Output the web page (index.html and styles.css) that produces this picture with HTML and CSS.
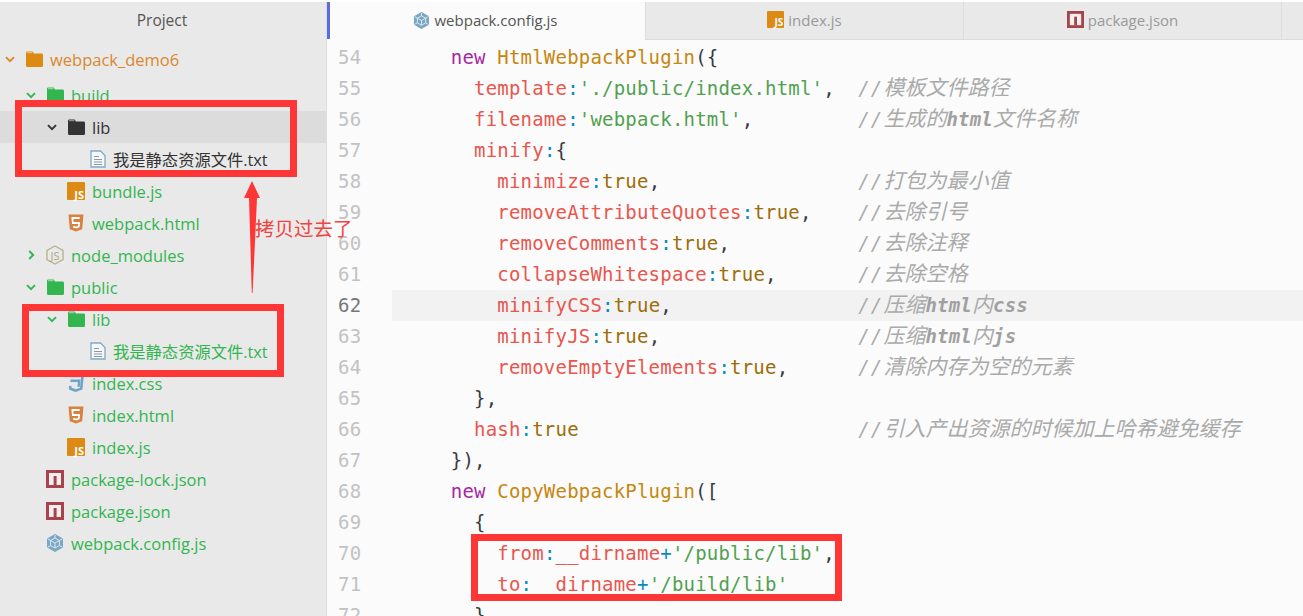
FILE: index.html
```html
<!DOCTYPE html>
<html lang="zh">
<head>
<meta charset="utf-8">
<title>webpack.config.js</title>
<link rel="stylesheet" href="styles.css">
</head>
<body>
<svg class="defs" width="0" height="0" aria-hidden="true">
  <symbol id="i-folder" viewBox="0 0 18 17"><path d="M1 2.2Q1 1 2.2 1H7.6L9 3H16.6Q18 3 18 4.4V15Q18 16.5 16.6 16.5H2.4Q1 16.5 1 15Z" fill="currentColor"/><path d="M2 2.2H7.4" stroke="#fff" stroke-opacity=".55" stroke-width="1"/></symbol>
  <symbol id="i-chev-d" viewBox="0 0 10 7"><path d="M1 1.2L5 5.2L9 1.2" fill="none" stroke="currentColor" stroke-width="1.9"/></symbol>
  <symbol id="i-chev-r" viewBox="0 0 7 10"><path d="M1.2 1L5.2 5L1.2 9" fill="none" stroke="currentColor" stroke-width="1.9"/></symbol>
  <symbol id="i-txt" viewBox="0 0 16 18"><path d="M1 1H10.5L15 5.5V17H1Z" fill="#f4f6f8" stroke="#7fabc8" stroke-width="1.3"/><path d="M4 6.5H9M4 9.5H12M4 12H12M4 14.5H12" stroke="#8c9aa5" stroke-width="1"/></symbol>
  <symbol id="i-html" viewBox="0 0 16 18"><path d="M0.5 0.5H15.5L14.2 15.3L8 17.5L1.8 15.3Z" fill="#d8823f"/><path d="M11.6 4H4.4L4.8 9H11.1L10.8 12.6L8 13.5L5.2 12.6" fill="none" stroke="#fff" stroke-width="1.8"/></symbol>
  <symbol id="i-css" viewBox="0 0 16 18"><path d="M1.6 2H14.5L13.2 14.6L7.6 16.6L2.4 14.8L2 11.8" fill="none" stroke="#6fa4c8" stroke-width="2.6"/><path d="M2.4 6.8H11.2L10.6 12.8" fill="none" stroke="#6fa4c8" stroke-width="2.4"/></symbol>
  <symbol id="i-npm" viewBox="0 0 18 18"><rect width="18" height="18" fill="#a9434b"/><rect x="3" y="3" width="12" height="12" fill="#f3eff1"/><rect x="7.6" y="6" width="3" height="9" fill="#a9434b"/></symbol>
  <symbol id="i-cube" viewBox="0 0 18 18"><path d="M9 0L17 4.5V13.5L9 18L1 13.5V4.5Z" fill="#7aa8c4"/><path d="M9 4L13.4 6.5V11.5L9 14L4.6 11.5V6.5ZM4.6 6.5L9 9L13.4 6.5M9 9V14M9 1V4M1.6 4.8L4.6 6.5M16.4 4.8L13.4 6.5M1.6 13.2L4.6 11.5M16.4 13.2L13.4 11.5" fill="none" stroke="#e6eef3" stroke-width=".9"/></symbol>
</svg>

<div class="app">
  <aside class="side">
    <header class="side-head">Project</header>
    <ul class="tree">
      <li class="row root l0 c-root"><svg class="cd"><use href="#i-chev-d"/></svg><svg class="ico f-root"><use href="#i-folder"/></svg><span>webpack_demo6</span></li>
      <li class="row l1 c-green"><svg class="cd"><use href="#i-chev-d"/></svg><svg class="ico"><use href="#i-folder"/></svg><span>build</span></li>
      <li class="row l2 c-dark sel"><svg class="cd"><use href="#i-chev-d"/></svg><svg class="ico"><use href="#i-folder"/></svg><span>lib</span></li>
      <li class="row l3 c-dark"><i class="chev"></i><svg class="ico ico-doc"><use href="#i-txt"/></svg><span>我是静态资源文件.txt</span></li>
      <li class="row l2 c-green"><i class="chev"></i><b class="ico js"><em>JS</em></b><span>bundle.js</span></li>
      <li class="row l2 c-green"><i class="chev"></i><svg class="ico ico-txt"><use href="#i-html"/></svg><span>webpack.html</span></li>
      <li class="row l1 c-green"><svg class="cr"><use href="#i-chev-r"/></svg><svg class="ico ico-node" viewBox="0 0 18 20"><path d="M9 1L17 5.5V14.5L9 19L1 14.5V5.5Z" fill="none" stroke="#b6b58d" stroke-width="1.4"/><text x="9" y="14.5" class="node-txt">JS</text></svg><span>node_modules</span></li>
      <li class="row l1 c-green"><svg class="cd"><use href="#i-chev-d"/></svg><svg class="ico"><use href="#i-folder"/></svg><span>public</span></li>
      <li class="row l2 c-green"><svg class="cd"><use href="#i-chev-d"/></svg><svg class="ico"><use href="#i-folder"/></svg><span>lib</span></li>
      <li class="row l3 c-green"><i class="chev"></i><svg class="ico ico-doc"><use href="#i-txt"/></svg><span>我是静态资源文件.txt</span></li>
      <li class="row l2 c-green"><i class="chev"></i><svg class="ico ico-txt"><use href="#i-css"/></svg><span>index.css</span></li>
      <li class="row l2 c-green"><i class="chev"></i><svg class="ico ico-txt"><use href="#i-html"/></svg><span>index.html</span></li>
      <li class="row l2 c-green"><i class="chev"></i><b class="ico js"><em>JS</em></b><span>index.js</span></li>
      <li class="row l1 c-green"><i class="chev"></i><svg class="ico"><use href="#i-npm"/></svg><span>package-lock.json</span></li>
      <li class="row l1 c-green"><i class="chev"></i><svg class="ico"><use href="#i-npm"/></svg><span>package.json</span></li>
      <li class="row l1 c-green"><i class="chev"></i><svg class="ico"><use href="#i-cube"/></svg><span>webpack.config.js</span></li>
    </ul>
  </aside>

  <main class="main">
    <nav class="tabs">
      <div class="tab active"><svg class="tab-ico"><use href="#i-cube"/></svg>webpack.config.js</div>
      <div class="tab"><b class="tab-ico js"><em>JS</em></b>index.js</div>
      <div class="tab"><svg class="tab-ico"><use href="#i-npm"/></svg>package.json</div>
      <div class="tab-rest"></div>
    </nav>
    <div class="code">
<div class="ln"><span class="no">54</span><code>    <u class="k">new</u> <u class="f">HtmlWebpackPlugin</u>({</code></div>
<div class="ln"><span class="no">55</span><code>      <u class="p">template</u><u class="o">:</u><u class="s">'./public/index.html'</u>,  <u class="m">//<u class="z">模板文件路径</u></u></code></div>
<div class="ln"><span class="no">56</span><code>      <u class="p">filename</u><u class="o">:</u><u class="s">'webpack.html'</u>,         <u class="m">//<u class="z">生成的</u><u class="h">html</u><u class="z">文件名称</u></u></code></div>
<div class="ln"><span class="no">57</span><code>      <u class="p">minify</u><u class="o">:</u>{</code></div>
<div class="ln"><span class="no">58</span><code>        <u class="p">minimize</u><u class="o">:</u><u class="t">true</u>,                 <u class="m">//<u class="z">打包为最小值</u></u></code></div>
<div class="ln"><span class="no">59</span><code>        <u class="p">removeAttributeQuotes</u><u class="o">:</u><u class="t">true</u>,    <u class="m">//<u class="z">去除引号</u></u></code></div>
<div class="ln"><span class="no">60</span><code>        <u class="p">removeComments</u><u class="o">:</u><u class="t">true</u>,           <u class="m">//<u class="z">去除注释</u></u></code></div>
<div class="ln"><span class="no">61</span><code>        <u class="p">collapseWhitespace</u><u class="o">:</u><u class="t">true</u>,       <u class="m">//<u class="z">去除空格</u></u></code></div>
<div class="ln cur"><span class="no">62</span><code>        <u class="p">minifyCSS</u><u class="o">:</u><u class="t">true</u>,                <u class="m">//<u class="z">压缩</u><u class="h">html</u><u class="z">内</u><u class="h">css</u></u></code></div>
<div class="ln"><span class="no">63</span><code>        <u class="p">minifyJS</u><u class="o">:</u><u class="t">true</u>,                 <u class="m">//<u class="z">压缩</u><u class="h">html</u><u class="z">内</u><u class="h">js</u></u></code></div>
<div class="ln"><span class="no">64</span><code>        <u class="p">removeEmptyElements</u><u class="o">:</u><u class="t">true</u>,      <u class="m">//<u class="z">清除内存为空的元素</u></u></code></div>
<div class="ln"><span class="no">65</span><code>      },</code></div>
<div class="ln"><span class="no">66</span><code>      <u class="p">hash</u><u class="o">:</u><u class="t">true</u>                        <u class="m">//<u class="z">引入产出资源的时候加上哈希避免缓存</u></u></code></div>
<div class="ln"><span class="no">67</span><code>    }),</code></div>
<div class="ln"><span class="no">68</span><code>    <u class="k">new</u> <u class="f">CopyWebpackPlugin</u>([</code></div>
<div class="ln"><span class="no">69</span><code>      {</code></div>
<div class="ln"><span class="no">70</span><code>        <u class="p">from</u><u class="o">:</u><u class="p">__dirname</u><u class="o">+</u><u class="s">'/public/lib'</u>,</code></div>
<div class="ln"><span class="no">71</span><code>        <u class="p">to</u><u class="o">:</u><u class="p">__dirname</u><u class="o">+</u><u class="s">'/build/lib'</u></code></div>
<div class="ln"><span class="no">72</span><code>      }</code></div>
    </div>
  </main>
</div>

<div class="mark m1"></div>
<div class="mark m2"></div>
<div class="mark m3"></div>
<svg class="arrow" viewBox="0 0 20 114"><path d="M10 0L18 17H15L10.6 112H9.8L7 17H2Z" fill="#ff3636"/></svg>
<div class="note">拷贝过去了</div>
</body>
</html>
```
FILE: styles.css
```css
* { box-sizing: border-box; }
html, body { margin: 0; height: 100%; overflow: hidden; background: #fff; }
body { font-family: "Open Sans", "Noto Sans CJK SC", sans-serif; position: relative; }
.defs { position: absolute; }

.app { display: flex; height: 616px; padding-top: 2px; }

.side { width: 327px; flex: none; background: #e9e9e9; border-right: 1px solid #dedede; }
.side-head { height: 38px; padding: 0 2px 3px 0; display: flex; align-items: center; justify-content: center; font-size: 15.5px; color: #555; }
.tree { list-style: none; margin: 0; padding: 3px 0 0; }
.row { height: 32px; display: flex; align-items: center; font-size: 16.5px; white-space: nowrap; }
.root { margin-bottom: 4px; }
.l0 { padding-left: 4px; }
.l1 { padding-left: 25px; }
.l2 { padding-left: 46px; }
.l3 { padding-left: 67px; font-size: 16.3px; }
.c-root { color: #d9882e; }
.c-green { color: #33b550; }
.c-dark { color: #333; }
.sel { background: #dcdcdc; }

.chev { flex: none; width: 21px; height: 10px; display: block; }
.cd { flex: none; width: 10px; height: 7px; margin: 0 10px 0 1px; display: block; }
.cr { flex: none; width: 7px; height: 10px; margin: 0 11px 0 3px; display: block; }
.ico { flex: none; width: 18px; height: 18px; margin-right: 7px; display: block; }
.f-root { color: #dc8a12; }
.ico-txt { width: 16px; margin: 0 8px 0 1px; }
.ico-doc { width: 16px; margin: 0 7px 0 2px; }
.ico-node { height: 20px; }
.js, .tab-ico.js { background: #dc8a14; border-radius: 1px; color: #fff; position: relative; display: block; font-style: normal; }
.js em { position: absolute; right: 1px; bottom: -1px; font: bold 11px/13px "Open Sans", sans-serif; font-style: normal; }
.tab-ico.js em { font-size: 10px; line-height: 12px; bottom: 0; }
.node-txt { font: 11px "Open Sans", sans-serif; fill: #a8a77e; text-anchor: middle; }

.main { flex: 1; min-width: 0; background: #fbfbfb; border-left: 3px solid #5c6be0; border-image: linear-gradient(#5c6be0 38px, #fbfbfb 38px) 1; }
.tabs { display: flex; height: 38px; }
.tab { width: 318px; padding-bottom: 2px; display: flex; align-items: center; justify-content: center; gap: 4px; font-size: 15px; color: #999; background: #e9e9e9; border-left: 1px solid #dcdcdc; border-bottom: 1px solid #dcdcdc; }
.tab.active { width: 315px; background: #fbfbfb; color: #555; border: 0; padding: 0 4px 2px 0; }
.tab-ico { flex: none; width: 17px; height: 17px; display: block; }
.tab-rest { flex: 1; background: #e9e9e9; border-left: 1px solid #dcdcdc; border-bottom: 1px solid #dcdcdc; }

.code { padding-top: 2px; font: 19px/31px "DejaVu Sans Mono", monospace; color: #383a42; letter-spacing: .2px; overflow: hidden; }
.ln { display: flex; height: 31px; white-space: pre; }
.no { flex: none; width: 62px; padding-left: 8px; color: #c2c2c2; }
.cur .no { color: #777; }
.ln code { flex: 1; font: inherit; padding-left: 12.2px; white-space: pre; }
.cur code { background: #f2f2f2; }
u { text-decoration: none; }
.k { color: #a626a4; }
.f { color: #c6870f; }
.p { color: #e8564e; }
.o { color: #0a8bc0; }
.s { color: #50a14f; }
.t { color: #9c6d08; }
.m { color: #aaa; font-style: italic; letter-spacing: 1.2px; }
.z { font: italic 21px/0 "Noto Sans CJK SC", sans-serif; letter-spacing: 0; }
.h { font-weight: bold; color: #a0a0a0; letter-spacing: .2px; }

.mark { position: absolute; border: 7px solid #ff3636; }
.m1 { left: 15px; top: 100px; width: 282px; height: 77px; }
.m2 { left: 22px; top: 304px; width: 262px; height: 73px; }
.m3 { left: 471px; top: 534px; width: 371px; height: 67px; }
.arrow { position: absolute; left: 242px; top: 181px; width: 20px; height: 114px; }
.note { position: absolute; left: 255px; top: 215px; font: 19.5px/26px "Noto Sans CJK SC", sans-serif; color: #f0443f; }
```
